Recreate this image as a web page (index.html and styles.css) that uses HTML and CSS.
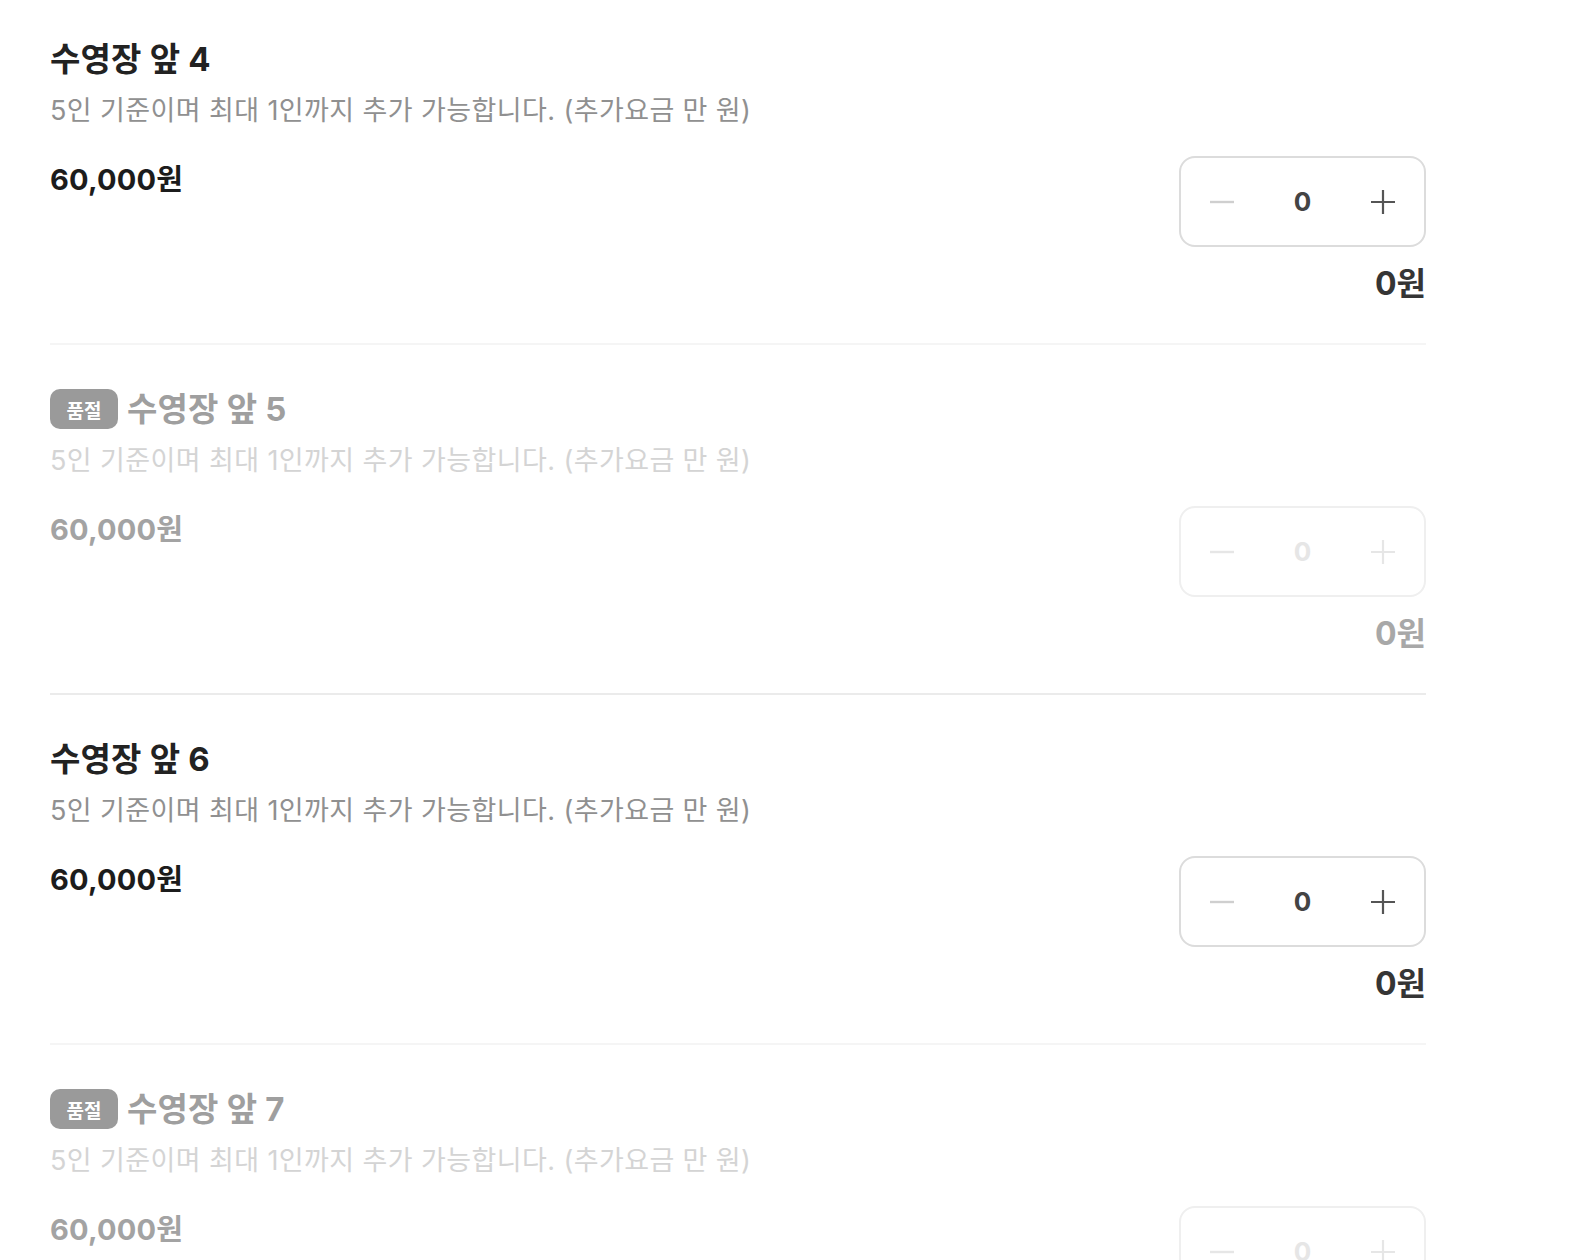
FILE: index.html
```html
<!DOCTYPE html>
<html lang="ko">
<head>
<meta charset="utf-8">
<title>옵션 선택</title>
<link rel="stylesheet" href="styles.css">
</head>
<body>
<div class="page">
  <ul class="list">
    <li class="item">
      <div class="title-row"><span class="title">수영장 앞 4</span></div>
      <p class="desc">5인 기준이며 최대 1인까지 추가 가능합니다. (추가요금 만 원)</p>
      <div class="row">
        <div class="price">60,000원</div>
        <div class="order">
          <div class="stepper">
            <span class="btn minus"><svg width="26" height="26" viewBox="0 0 26 26"><path d="M1 13h24" stroke="currentColor" stroke-width="2.4"/></svg></span>
            <span class="qty">0</span>
            <span class="btn plus"><svg width="26" height="26" viewBox="0 0 26 26"><path d="M1 13h24M13 1v24" stroke="currentColor" stroke-width="2.2"/></svg></span>
          </div>
          <div class="total">0원</div>
        </div>
      </div>
    </li>
    <li class="item soldout">
      <div class="title-row"><span class="badge">품절</span><span class="title">수영장 앞 5</span></div>
      <p class="desc">5인 기준이며 최대 1인까지 추가 가능합니다. (추가요금 만 원)</p>
      <div class="row">
        <div class="price">60,000원</div>
        <div class="order">
          <div class="stepper">
            <span class="btn minus"><svg width="26" height="26" viewBox="0 0 26 26"><path d="M1 13h24" stroke="currentColor" stroke-width="2.4"/></svg></span>
            <span class="qty">0</span>
            <span class="btn plus"><svg width="26" height="26" viewBox="0 0 26 26"><path d="M1 13h24M13 1v24" stroke="currentColor" stroke-width="2.2"/></svg></span>
          </div>
          <div class="total">0원</div>
        </div>
      </div>
    </li>
    <li class="item">
      <div class="title-row"><span class="title">수영장 앞 6</span></div>
      <p class="desc">5인 기준이며 최대 1인까지 추가 가능합니다. (추가요금 만 원)</p>
      <div class="row">
        <div class="price">60,000원</div>
        <div class="order">
          <div class="stepper">
            <span class="btn minus"><svg width="26" height="26" viewBox="0 0 26 26"><path d="M1 13h24" stroke="currentColor" stroke-width="2.4"/></svg></span>
            <span class="qty">0</span>
            <span class="btn plus"><svg width="26" height="26" viewBox="0 0 26 26"><path d="M1 13h24M13 1v24" stroke="currentColor" stroke-width="2.2"/></svg></span>
          </div>
          <div class="total">0원</div>
        </div>
      </div>
    </li>
    <li class="item soldout">
      <div class="title-row"><span class="badge">품절</span><span class="title">수영장 앞 7</span></div>
      <p class="desc">5인 기준이며 최대 1인까지 추가 가능합니다. (추가요금 만 원)</p>
      <div class="row">
        <div class="price">60,000원</div>
        <div class="order">
          <div class="stepper">
            <span class="btn minus"><svg width="26" height="26" viewBox="0 0 26 26"><path d="M1 13h24" stroke="currentColor" stroke-width="2.4"/></svg></span>
            <span class="qty">0</span>
            <span class="btn plus"><svg width="26" height="26" viewBox="0 0 26 26"><path d="M1 13h24M13 1v24" stroke="currentColor" stroke-width="2.2"/></svg></span>
          </div>
          <div class="total">0원</div>
        </div>
      </div>
    </li>
  </ul>
</div>
</body>
</html>
```

FILE: styles.css
```css
* { box-sizing: border-box; }
html, body {
  margin: 0;
  padding: 0;
  background: #fff;
}
body {
  font-family: Inter, "Noto Sans CJK KR", sans-serif;
  color: #222;
}
.page {
  height: 1260px;
  overflow: hidden;
  padding-left: 50px;
}
.list {
  list-style: none;
  margin: 0;
  padding: 0;
  width: 1376px;
}
.item {
  padding: 42px 0 39px;
  border-bottom: 2px solid #f5f5f5;
}
.item:first-child {
  padding-top: 37px;
}
.item.soldout {
  border-bottom-color: #ebebeb;
}
.title-row {
  display: flex;
  align-items: center;
  gap: 9px;
  height: 44px;
}
.title {
  font-size: 33px;
  line-height: 44px;
  font-weight: 700;
  color: #222;
  letter-spacing: 0.2px;
}
.badge {
  display: inline-flex;
  align-items: center;
  justify-content: center;
  width: 68px;
  height: 40px;
  border-radius: 10px;
  background: #9a9a9a;
  color: #fff;
  font-size: 19px;
  font-weight: 700;
}
.desc {
  margin: 12px 0 0;
  font-size: 27px;
  line-height: 36px;
  color: #909090;
  font-weight: 400;
  letter-spacing: 0.4px;
}
.row {
  display: flex;
  justify-content: space-between;
  align-items: flex-start;
  margin-top: 27px;
}
.price {
  font-size: 29px;
  line-height: 48px;
  font-weight: 700;
  color: #1c1c1c;
  letter-spacing: 0.2px;
}
.order {
  display: flex;
  flex-direction: column;
  align-items: flex-end;
}
.stepper {
  width: 247px;
  height: 91px;
  border: 2px solid #dcdcdc;
  border-radius: 16px;
  display: flex;
  align-items: center;
  justify-content: space-between;
  padding: 0 28px;
}
.btn {
  display: flex;
  width: 26px;
  height: 26px;
}
.minus { color: #cfcfcf; }
.plus { color: #555; }
.qty {
  font-size: 26px;
  font-weight: 700;
  color: #444;
}
.total {
  margin-top: 17px;
  font-size: 32px;
  line-height: 40px;
  font-weight: 700;
  color: #353535;
}
.soldout .title { color: #9f9f9f; }
.soldout .desc { color: #d4d4d4; }
.soldout .price { color: #a3a3a3; }
.soldout .stepper { border-color: #efefef; }
.soldout .minus,
.soldout .plus { color: #e6e6e6; }
.soldout .qty { color: #e6e6e6; }
.soldout .total { color: #a8a8a8; }
```
